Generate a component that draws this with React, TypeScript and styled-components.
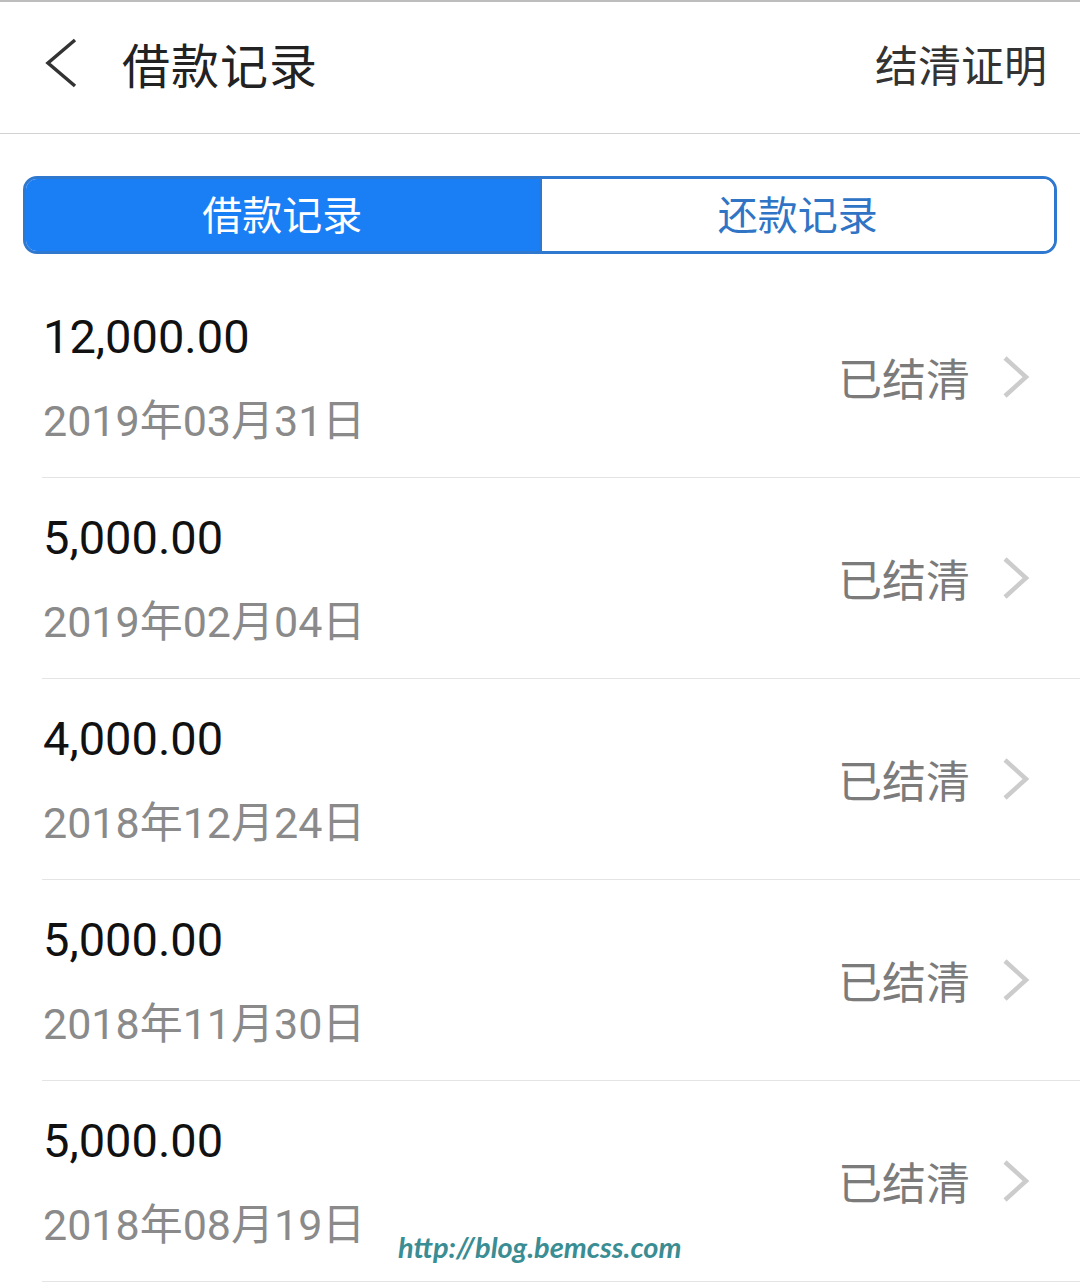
import styled, { createGlobalStyle } from "styled-components";

const GlobalStyle = createGlobalStyle`
    html, body {
        margin: 0;
        padding: 0;
        background: #ffffff;
    }
    body {
        font-family: Roboto, "Noto Sans CJK SC", sans-serif;
    }
`;

const Page = styled.div`
    position: relative;
    width: 1080px;
    min-height: 1287px;
    border-top: 2px solid #bdbdbd;
    box-sizing: border-box;
    background: #fff;
`;

const Header = styled.header`
    height: 132px;
    display: flex;
    align-items: center;
    padding: 0 33px 9px 44px;
    box-sizing: border-box;
    border-bottom: 1px solid #d2d2d2;
`;

const BackButton = styled.button`
    border: 0;
    background: none;
    padding: 0;
    width: 34px;
    height: 50px;
    margin-right: 44px;
    display: flex;
    align-items: center;
    cursor: pointer;
`;

const Title = styled.h1`
    margin: 0;
    flex: 1;
    font-family: "Noto Sans CJK SC", sans-serif;
    font-weight: 400;
    font-size: 48px;
    color: #222;
    letter-spacing: 1px;
`;

const HeaderAction = styled.span`
    font-family: "Noto Sans CJK SC", sans-serif;
    font-size: 43px;
    color: #333;
`;

const Segment = styled.div`
    margin: 42px 23px 0;
    height: 78px;
    display: flex;
    border: 3px solid #2f78cf;
    border-radius: 14px;
    overflow: hidden;
    box-sizing: border-box;
`;

const Tab = styled.div<{ $active?: boolean }>`
    flex: 1;
    display: flex;
    align-items: center;
    justify-content: center;
    padding-bottom: 4px;
    font-family: "Noto Sans CJK SC", sans-serif;
    font-size: 40px;
    background: ${(p) => (p.$active ? "#1a7ef5" : "#fff")};
    color: ${(p) => (p.$active ? "#fff" : "#2f74c5")};
    border-right: ${(p) => (p.$active ? "3px solid #2f78cf" : "0")};
`;

const List = styled.ul`
    list-style: none;
    margin: 23px 0 0;
    padding: 0;
`;

const Row = styled.li`
    height: 200px;
    margin-left: 42px;
    padding-right: 50px;
    border-bottom: 1px solid #e4e4e4;
    display: flex;
    align-items: center;
    justify-content: space-between;
`;

const Info = styled.div`
    display: flex;
    flex-direction: column;
    padding-left: 1px;
`;

const Amount = styled.div`
    font-family: Roboto, sans-serif;
    font-size: 47px;
    line-height: 56px;
    color: #111;
`;

const DateText = styled.div`
    font-family: Roboto, "Noto Sans CJK SC", sans-serif;
    font-size: 43px;
    line-height: 50px;
    color: #8a8a8a;
    margin-top: 31px;
`;

const Status = styled.div`
    display: flex;
    align-items: center;
    gap: 32px;
    font-family: "Noto Sans CJK SC", sans-serif;
    font-size: 44px;
    color: #7b7b7b;
`;

const Watermark = styled.div`
    position: absolute;
    left: 398px;
    top: 1227px;
    font-family: Lato, sans-serif;
    font-weight: 700;
    font-style: italic;
    font-size: 29px;
    color: #3a8d93;
`;

const records = [
    { amount: "12,000.00", date: "2019年03月31日" },
    { amount: "5,000.00", date: "2019年02月04日" },
    { amount: "4,000.00", date: "2018年12月24日" },
    { amount: "5,000.00", date: "2018年11月30日" },
    { amount: "5,000.00", date: "2018年08月19日" },
];

const BackIcon = () => (
    <svg width="34" height="50" viewBox="0 0 34 50">
        <path d="M31 2 L4 25 L31 48" fill="none" stroke="#333" strokeWidth="3.5" />
    </svg>
);

const ChevronIcon = () => (
    <svg width="28" height="42" viewBox="0 0 28 42">
        <path d="M3 2 L24 21 L3 40" fill="none" stroke="#cccccc" strokeWidth="4.5" />
    </svg>
);

export default function App() {
    return (
        <Page>
            <GlobalStyle />
            <Header>
                <BackButton aria-label="返回">
                    <BackIcon />
                </BackButton>
                <Title>借款记录</Title>
                <HeaderAction>结清证明</HeaderAction>
            </Header>
            <Segment>
                <Tab $active>借款记录</Tab>
                <Tab>还款记录</Tab>
            </Segment>
            <List>
                {records.map((r, i) => (
                    <Row key={i}>
                        <Info>
                            <Amount>{r.amount}</Amount>
                            <DateText>{r.date}</DateText>
                        </Info>
                        <Status>
                            已结清
                            <ChevronIcon />
                        </Status>
                    </Row>
                ))}
            </List>
            <Watermark>http://blog.bemcss.com</Watermark>
        </Page>
    );
}
